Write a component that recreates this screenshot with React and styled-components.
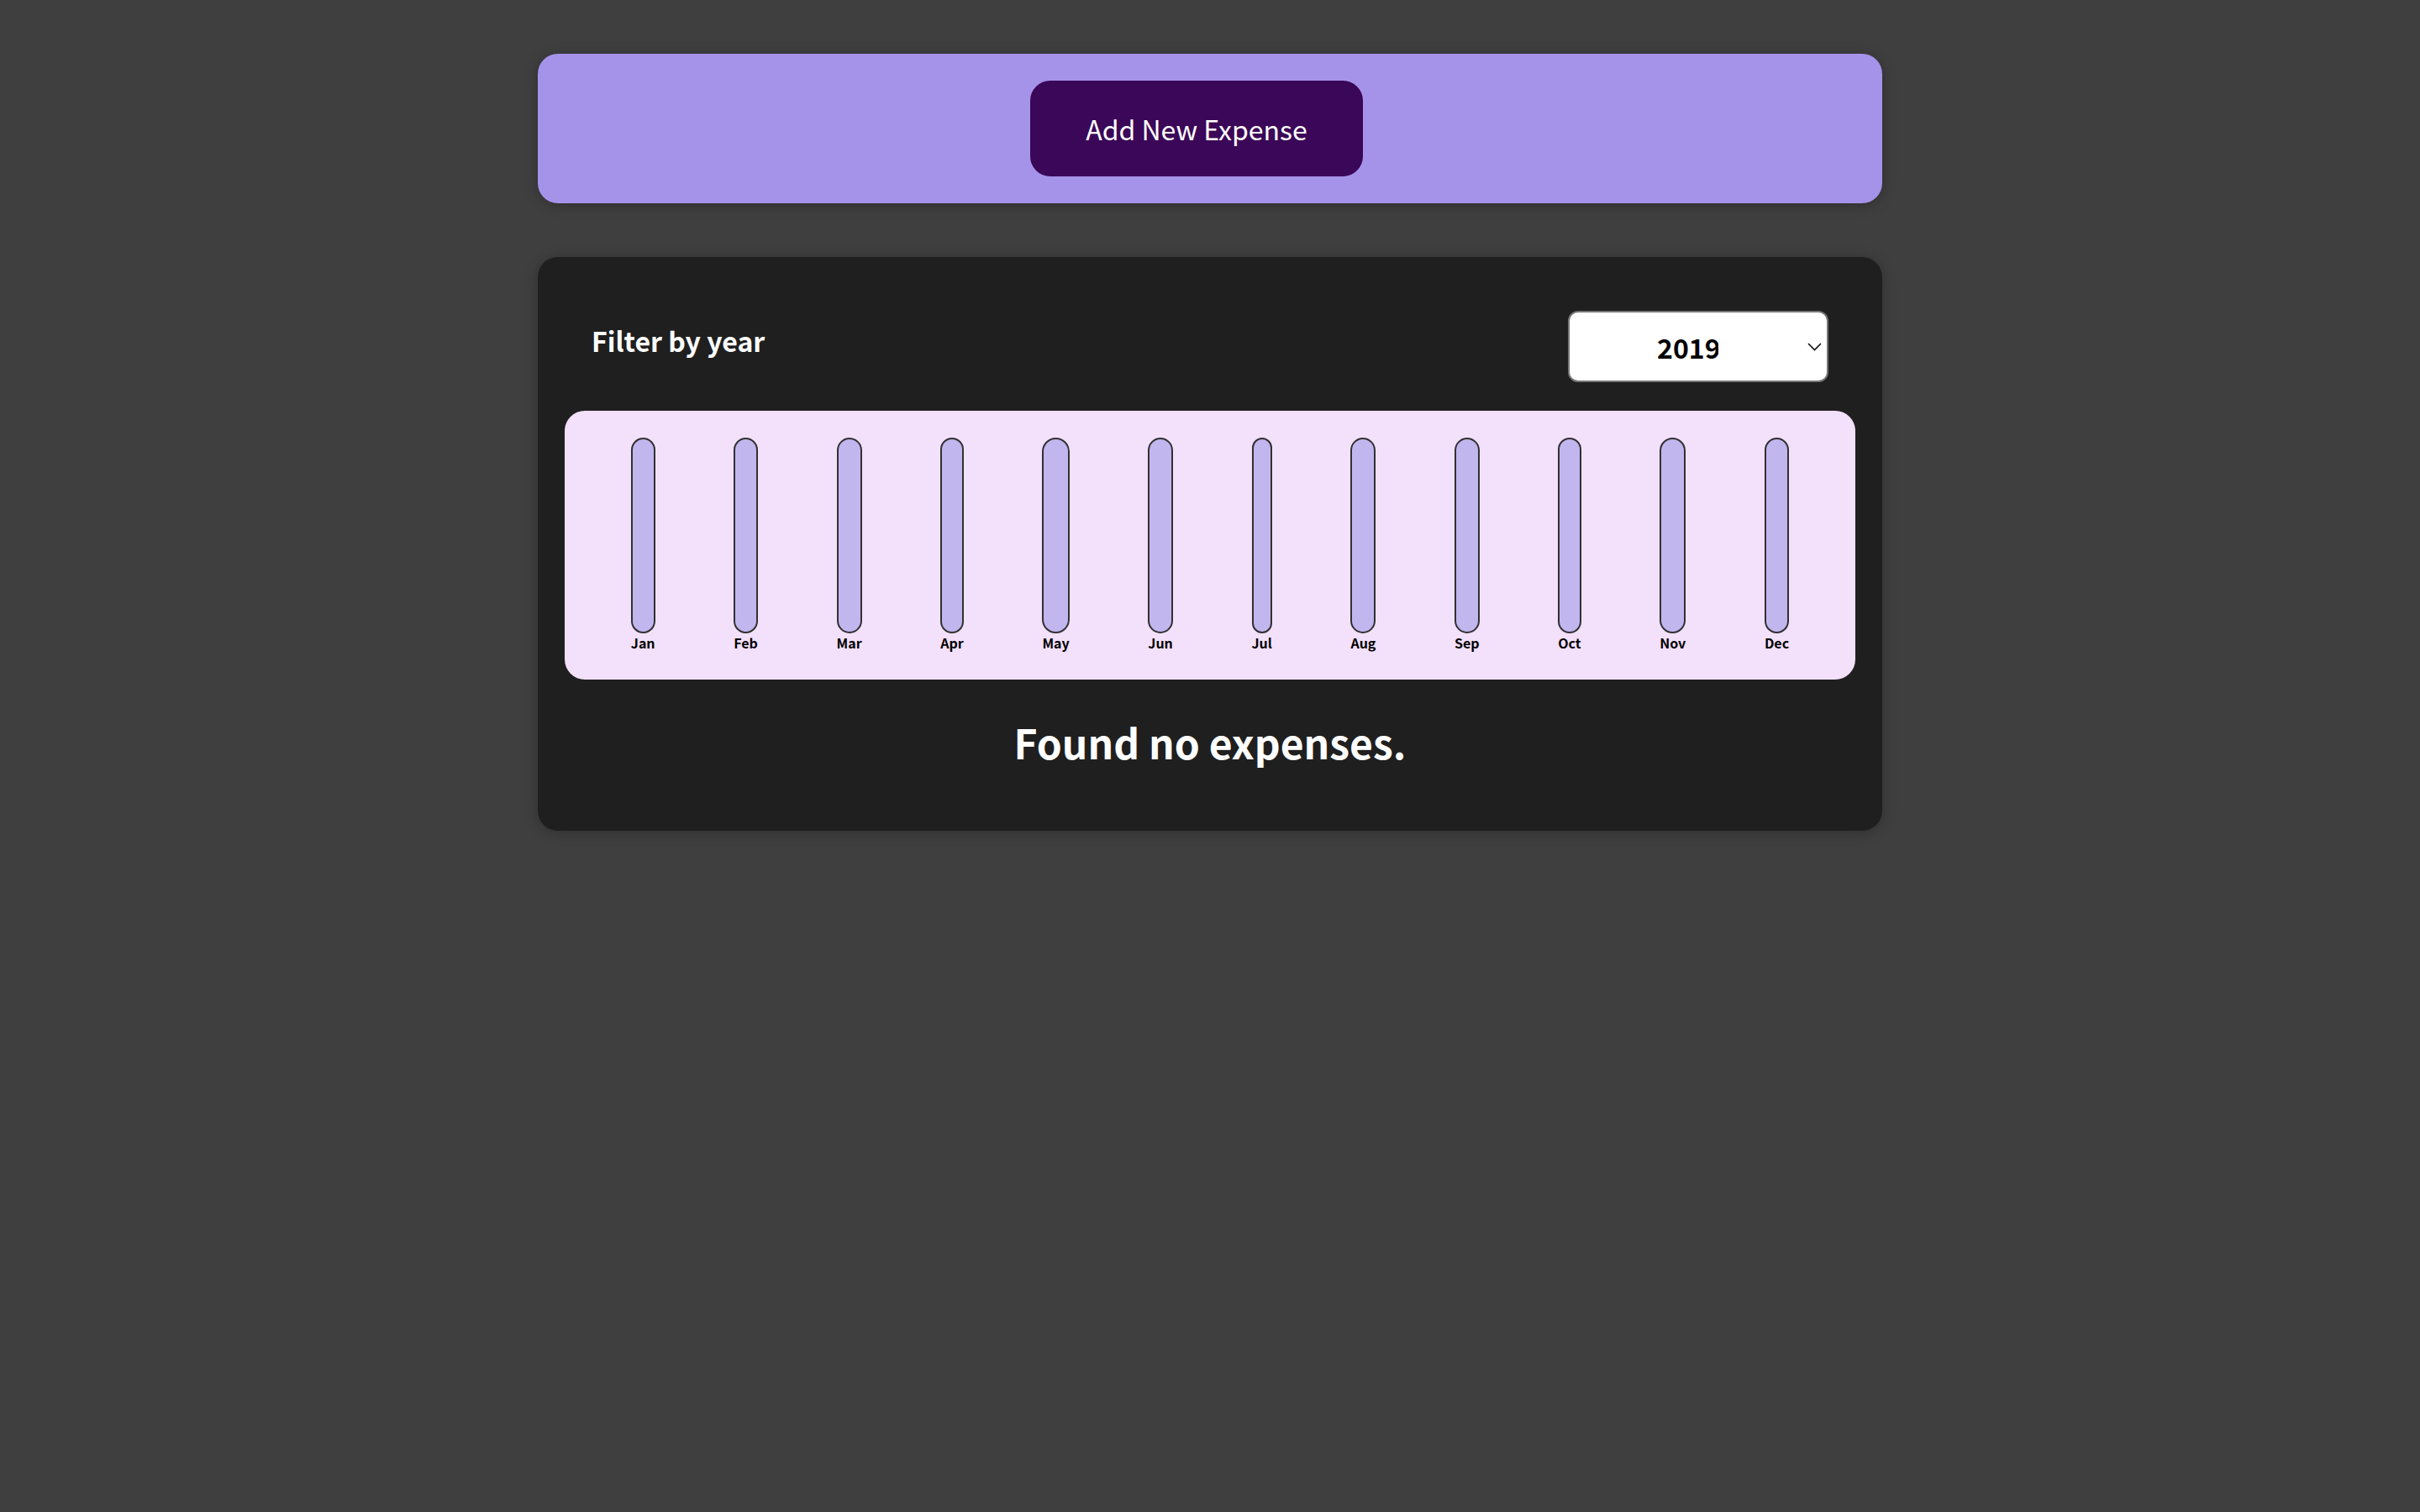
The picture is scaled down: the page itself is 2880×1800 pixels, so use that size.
import React from "react";
import styled, { createGlobalStyle } from "styled-components";

const GlobalStyle = createGlobalStyle`
  * { box-sizing: border-box; }
  html { font-family: "Noto Sans CJK JP", "Noto Sans", sans-serif; }
  body { margin: 0; background-color: #3f3f3f; }
`;

const Page = styled.div`
  display: flex;
  flex-direction: column;
  align-items: center;
  padding: 64px 0;
  gap: 64px;
`;

const Card = styled.div`
  width: 1600px;
  max-width: 95%;
  border-radius: 24px;
  box-shadow: 0 2px 16px rgba(0, 0, 0, 0.25);
  padding: 32px;
`;

const NewExpenseCard = styled(Card)`
  background-color: #a593ea;
  text-align: center;
`;

const AddButton = styled.button`
  font-family: inherit;
  font-size: 32px;
  line-height: 1.448;
  cursor: pointer;
  padding: 32px 64px;
  border: 2px solid #3b0758;
  background-color: #3b0758;
  color: #ffffff;
  border-radius: 24px;
  margin-right: 32px;
`;

const ExpensesCard = styled(Card)`
  background-color: #1f1f1f;
`;

const Filter = styled.div`
  color: #ffffff;
  padding: 0 32px;
`;

const FilterControl = styled.div`
  display: flex;
  width: 100%;
  align-items: center;
  justify-content: space-between;
  margin: 32px 0 34px;
`;

const FilterLabel = styled.label`
  font-size: 32px;
  line-height: 1.448;
  font-weight: bold;
  margin-bottom: 16px;
`;

const SelectWrap = styled.div`
  position: relative;
  display: flex;
`;

const YearSelect = styled.select`
  appearance: none;
  -webkit-appearance: none;
  font-family: inherit;
  font-size: 32px;
  font-weight: bold;
  color: #000;
  background: #fff;
  width: 310px;
  height: 85px;
  padding: 0 129px 0 104px;
  border: 2px solid #767676;
  border-radius: 12px;
  outline: none;
`;

const Chevron = styled.svg`
  position: absolute;
  right: 8px;
  top: 50%;
  width: 17px;
  height: 10px;
  transform: translateY(-50%);
  pointer-events: none;
`;

const Chart = styled.div`
  padding: 32px;
  border-radius: 24px;
  background-color: #f3e0fb;
  text-align: center;
  display: flex;
  justify-content: space-around;
  height: 320px;
`;

const Bar = styled.div`
  height: 100%;
  display: flex;
  flex-direction: column;
  align-items: center;
`;

const BarInner = styled.div`
  height: 100%;
  width: 100%;
  border: 2px solid #313131;
  border-radius: 24px;
  background-color: #c2b6ef;
  overflow: hidden;
  display: flex;
  flex-direction: column;
  justify-content: flex-end;
`;

const BarFill = styled.div`
  background-color: #4826b9;
  width: 100%;
`;

const BarLabel = styled.div`
  font-weight: bold;
  font-size: 16px;
  line-height: 1.448;
  text-align: center;
  color: #000;
`;

const Fallback = styled.h2`
  color: #ffffff;
  text-align: center;
  font-size: 48px;
  line-height: 1.448;
  margin: 40px 0 38px;
`;

const months = ["Jan", "Feb", "Mar", "Apr", "May", "Jun", "Jul", "Aug", "Sep", "Oct", "Nov", "Dec"];

export default function App() {
  return (
    <>
      <GlobalStyle />
      <Page>
        <NewExpenseCard>
          <AddButton>Add New Expense</AddButton>
        </NewExpenseCard>
        <ExpensesCard>
          <Filter>
            <FilterControl>
              <FilterLabel>Filter by year</FilterLabel>
              <SelectWrap>
                <YearSelect defaultValue="2019">
                  <option value="2022">2022</option>
                  <option value="2021">2021</option>
                  <option value="2020">2020</option>
                  <option value="2019">2019</option>
                </YearSelect>
                <Chevron viewBox="0 0 17 10">
                  <path d="M1 1 L8.5 8.5 L16 1" fill="none" stroke="#111" strokeWidth="1.6" />
                </Chevron>
              </SelectWrap>
            </FilterControl>
          </Filter>
          <Chart>
            {months.map((m) => (
              <Bar key={m}>
                <BarInner>
                  <BarFill style={{ height: "0%" }} />
                </BarInner>
                <BarLabel>{m}</BarLabel>
              </Bar>
            ))}
          </Chart>
          <Fallback>Found no expenses.</Fallback>
        </ExpensesCard>
      </Page>
    </>
  );
}
